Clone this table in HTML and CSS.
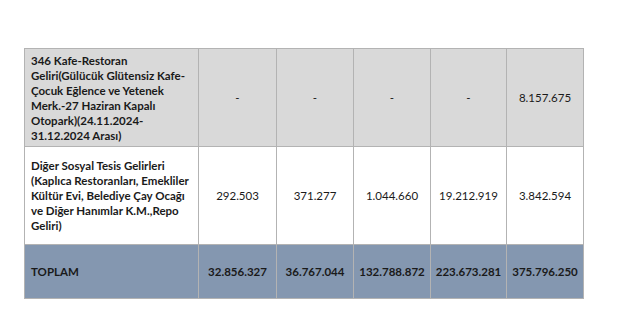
FILE: index.html
```html
<!DOCTYPE html>
<html lang="tr">
<head>
    <meta charset="UTF-8">
    <title>Gelir Tablosu</title>
    <link rel="stylesheet" href="styles.css">
</head>
<body>
    <div class="page">
        <table class="gelir">
            <colgroup>
                <col class="c-name">
                <col class="c1">
                <col class="c2">
                <col class="c3">
                <col class="c4">
                <col class="c5">
            </colgroup>
            <tr class="row-gray">
                <td class="name">346 Kafe-Restoran Geliri(Gülücük Glütensiz Kafe-Çocuk Eğlence ve Yetenek Merk.-27 Haziran Kapalı Otopark)(24.11.2024-31.12.2024 Arası)</td>
                <td>-</td>
                <td>-</td>
                <td>-</td>
                <td>-</td>
                <td>8.157.675</td>
            </tr>
            <tr class="row-white">
                <td class="name">Diğer Sosyal Tesis Gelirleri (Kaplıca Restoranları, Emekliler Kültür Evi, Belediye Çay Ocağı ve Diğer Hanımlar K.M.,Repo Geliri)</td>
                <td>292.503</td>
                <td>371.277</td>
                <td>1.044.660</td>
                <td>19.212.919</td>
                <td>3.842.594</td>
            </tr>
            <tr class="row-total">
                <td class="name">TOPLAM</td>
                <td>32.856.327</td>
                <td>36.767.044</td>
                <td>132.788.872</td>
                <td>223.673.281</td>
                <td>375.796.250</td>
            </tr>
        </table>
    </div>
</body>
</html>
```

FILE: styles.css
```css
body {
    margin: 0;
    background: #fff;
    font-family: Lato, "Open Sans", sans-serif;
    color: #1a1a1a;
}

.page {
    padding: 48px 0 0 24px;
}

/* main table */
.gelir {
    border-collapse: collapse;
    table-layout: fixed;
    width: 559px;
    font-size: 11.5px;
}

.c-name { width: 174px; }
.c1 { width: 78px; }
.c2 { width: 77px; }
.c3 { width: 77px; }
.c4 { width: 76px; }
.c5 { width: 77px; }

.gelir td {
    border: 1px solid #b3b3b3;
    text-align: center;
    vertical-align: middle;
    padding: 0 4px;
    line-height: 15px;
}

.gelir td.name {
    text-align: left;
    font-weight: bold;
    padding: 0 6px 0 6px;
}

.row-gray td { background: #d9d9d9; height: 97px; }
.row-white td { background: #fff; height: 97px; }

.row-total td {
    background: #8497b0;
    height: 53px;
    font-weight: bold;
}
```
